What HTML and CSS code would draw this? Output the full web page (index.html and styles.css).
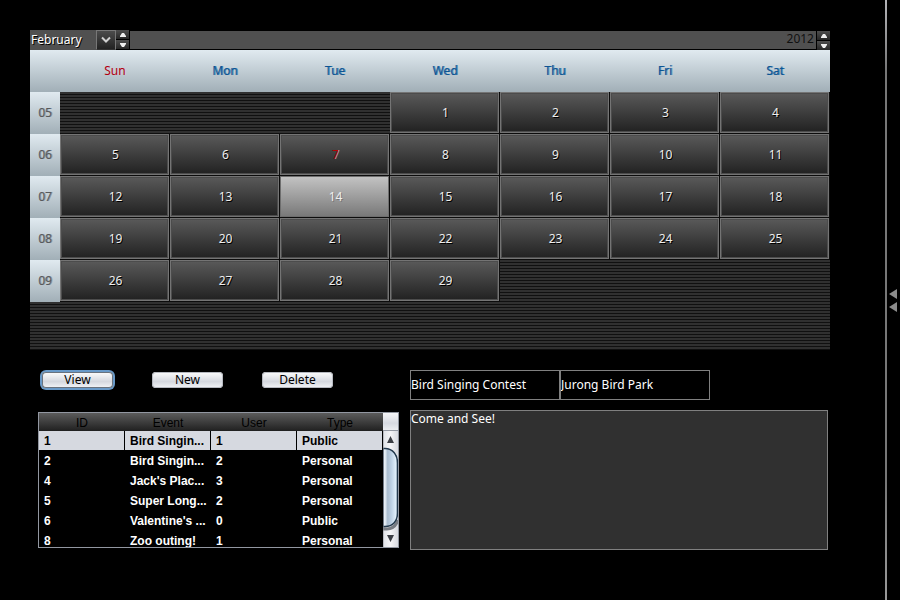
FILE: index.html
```html
<!DOCTYPE html>
<html lang="en">
<head>
<meta charset="utf-8">
<title>Event calendar</title>
<link rel="stylesheet" href="styles.css">
</head>
<body>
<div class="app">
<main class="main">
  <section class="calendar" aria-label="Calendar">
    <div class="bar">
      <div class="month">
        <select class="month-select" aria-label="Month"><option>February</option></select>
        <span class="month-arrow"><svg width="10" height="8" viewBox="0 0 10 8"><path d="M1 1.500L5 5.500L9 1.500" fill="none" stroke="#d0d0d0" stroke-width="2"/></svg></span>
      </div>
      <div class="spin">
        <button type="button" aria-label="Next month"><svg width="6" height="4"><path d="M0 4V3L2 0H4L6 3V4z"/></svg></button>
        <button type="button" aria-label="Previous month"><svg width="6" height="4"><path d="M0 0V1L2 4H4L6 1V0z"/></svg></button>
      </div>
      <input class="year" type="text" value="2012" aria-label="Year">
      <div class="spin">
        <button type="button" aria-label="Next year"><svg width="6" height="4"><path d="M0 4V3L2 0H4L6 3V4z"/></svg></button>
        <button type="button" aria-label="Previous year"><svg width="6" height="4"><path d="M0 0V1L2 4H4L6 1V0z"/></svg></button>
      </div>
    </div>
    <table class="days">
      <thead><tr><td class="corner"></td><th class="sunday">Sun</th><th>Mon</th><th>Tue</th><th>Wed</th><th>Thu</th><th>Fri</th><th>Sat</th></tr></thead>
      <tbody>
        <tr><th>05</th><td></td><td></td><td></td><td><button type="button">1</button></td><td><button type="button">2</button></td><td><button type="button">3</button></td><td><button type="button">4</button></td></tr>
        <tr><th>06</th><td><button type="button">5</button></td><td><button type="button">6</button></td><td><button type="button" class="today">7</button></td><td><button type="button">8</button></td><td><button type="button">9</button></td><td><button type="button">10</button></td><td><button type="button">11</button></td></tr>
        <tr><th>07</th><td><button type="button">12</button></td><td><button type="button">13</button></td><td><button type="button" class="selected">14</button></td><td><button type="button">15</button></td><td><button type="button">16</button></td><td><button type="button">17</button></td><td><button type="button">18</button></td></tr>
        <tr><th>08</th><td><button type="button">19</button></td><td><button type="button">20</button></td><td><button type="button">21</button></td><td><button type="button">22</button></td><td><button type="button">23</button></td><td><button type="button">24</button></td><td><button type="button">25</button></td></tr>
        <tr><th>09</th><td><button type="button">26</button></td><td><button type="button">27</button></td><td><button type="button">28</button></td><td><button type="button">29</button></td><td></td><td></td><td></td></tr>
      </tbody>
    </table>
  </section>

  <div class="lower">
    <section class="events">
      <div class="actions">
        <button type="button" class="focused">View</button>
        <button type="button">New</button>
        <button type="button">Delete</button>
      </div>
      <div class="list">
        <div class="list-body">
        <table>
          <thead><tr><th>ID</th><th>Event</th><th>User</th><th>Type</th></tr></thead>
          <tbody>
            <tr class="current"><td>1</td><td>Bird Singin...</td><td>1</td><td>Public</td></tr>
            <tr><td>2</td><td>Bird Singin...</td><td>2</td><td>Personal</td></tr>
            <tr><td>4</td><td>Jack's Plac...</td><td>3</td><td>Personal</td></tr>
            <tr><td>5</td><td>Super Long...</td><td>2</td><td>Personal</td></tr>
            <tr><td>6</td><td>Valentine's ...</td><td>0</td><td>Public</td></tr>
            <tr><td>8</td><td>Zoo outing!</td><td>1</td><td>Personal</td></tr>
          </tbody>
        </table>
        </div>
        <div class="scroll">
          <div class="scroll-corner"></div>
          <svg width="15" height="116" viewBox="0 0 15 116" aria-hidden="true">
            <defs>
              <linearGradient id="track"><stop offset="0" stop-color="#a9acb2"/><stop offset=".2" stop-color="#dcdee3"/><stop offset="1" stop-color="#f0f1f4"/></linearGradient>
              <linearGradient id="thumb"><stop offset="0" stop-color="#f4f8fc"/><stop offset=".15" stop-color="#e4ecf4"/><stop offset=".32" stop-color="#a9bccf"/><stop offset=".6" stop-color="#c0d3e6"/><stop offset=".9" stop-color="#e2f1fc"/><stop offset="1" stop-color="#a8bdd0"/></linearGradient>
              <linearGradient id="cap"><stop offset="0" stop-color="#e0e2e7"/><stop offset=".5" stop-color="#f5f5f7"/><stop offset="1" stop-color="#d8dae0"/></linearGradient>
            </defs>
            <rect width="15" height="116" fill="url(#track)"/>
            <path d="M0 0H15V27Q12 17 3 17H0z" fill="url(#cap)"/>
            <path d="M0 116H15V86Q12 97 3 97H0z" fill="url(#cap)"/>
            <path d="M0 98H4Q12 98 15 89" fill="none" stroke="#777b82" stroke-width="3"/>
            <path d="M0 17.500H2C10 17.500 14.500 24 14.500 32V82C14.500 90 10 95.500 2 95.500H0z" fill="url(#thumb)" stroke="#23394d" stroke-width="1.500"/>
            <path d="M0 0V116" stroke="#8d9097" stroke-width="1"/>
            <path d="M4 12L7.500 5L11 12z M4 104L7.500 111L11 104z" fill="#3c3f45"/>
          </svg>
        </div>
      </div>
    </section>
    <section class="details">
      <div class="fields">
        <input type="text" value="Bird Singing Contest" aria-label="Event name">
        <input type="text" value="Jurong Bird Park" aria-label="Venue">
      </div>
      <textarea aria-label="Description">Come and See!</textarea>
    </section>
  </div>
</main>
<aside class="splitter">
  <button type="button" aria-label="Collapse"><svg width="8" height="10"><path d="M8 0V10L0 5z"/></svg></button>
  <button type="button" aria-label="Collapse fully"><svg width="8" height="10"><path d="M8 0V10L0 5z"/></svg></button>
</aside>
</div>
</body>
</html>
```
FILE: styles.css
```css
* { box-sizing: border-box; }
body { margin: 0; background: #000; color: #fff; font: 12px/16px "Noto Sans", "Open Sans", sans-serif; }
button, input, select, textarea { font: inherit; color: inherit; margin: 0; padding: 0; border: 0; border-radius: 0; outline: 0; }
button { display: block; }
svg { display: block; }
table { width: 100%; border-collapse: collapse; table-layout: fixed; }
th, td { padding: 0; }

.app { display: flex; min-height: 100vh; }
.main { flex: 1; min-width: 0; padding: 30px 55px 30px 30px; }

.calendar { padding-bottom: 48px; background: repeating-linear-gradient(#303030 0 1px, #101010 1px 2px, #303030 2px 3px); }
.bar { display: flex; height: 20px; background: #000; }
.month { display: flex; position: relative; width: 86px; }
.month-select { flex: 1; appearance: none; padding-left: 1px; background: #505050; text-shadow: 1px 1px #000; }
.month-arrow { position: absolute; right: 0; top: 0; width: 20px; height: 20px; display: grid; place-items: center; border: 1px solid #777; border-bottom-color: #333; background: linear-gradient(#4c4c4c, #222); pointer-events: none; }
.spin { display: grid; grid-template-rows: 9px 9px; gap: 1px; width: 14px; padding-right: 1px; }
.spin:last-child { padding: 1px 0 0 1px; }
.spin button { display: grid; place-items: center; background: linear-gradient(#4e4e4e, #262626); }
.spin svg { fill: #eee; }
.year { flex: 1; min-width: 0; margin: 1px 0; padding: 0 2px 2px; background: #505050; color: #101010; text-align: right; }

.days tr { height: 42px; }
.days thead tr { background: linear-gradient(#e0eaf0, #a1afb7); }
.days thead th { color: #0c5594; font-weight: 400; text-shadow: 1px 0 #4b82ad; }
.days thead .sunday { color: #b00010; text-shadow: 1px 0 #d5c6d0; }
.days .corner { width: 30px; }
.days tbody th { font-weight: 400; color: #56595c; background: linear-gradient(#e0eaf0, #a1afb7); text-shadow: 1px 0 #8b9196; }
.days td button { width: 100%; height: 42px; padding-left: 2px; border: solid #0c0c0c; border-width: 0 1px 1px 0; background: linear-gradient(#5b5b5b, #202020); box-shadow: inset 0 0 0 1px #747474, inset 0 0 0 2px #4c4c4c; color: #eee; text-shadow: 1px 1px #000; }
.days td .today { color: #b60000; text-shadow: 1px 0 #aaa; }
.days td .selected { background: linear-gradient(#c4c4c4, #777); box-shadow: inset 0 0 0 1px #6e6e6e; text-shadow: 1px 1px #777; }

.lower { display: grid; grid-template-columns: 361fr 418fr; gap: 11px; padding: 20px 2px 0 8px; }
.actions { display: flex; gap: 39px; padding: 2px 4px 0; }
.actions button { width: 71px; height: 16px; border-radius: 4px; background: linear-gradient(#fdfdfd, #d5d8df 60%, #f4f5f8); color: #000; box-shadow: inset 0 0 0 1px #b6b9c0; line-height: 16px; }
.actions .focused { box-shadow: inset 0 0 0 1px #69727d, 0 0 0 2px #6899c8; }
.list { display: flex; height: 136px; margin-top: 24px; border: 1px solid #9297a1; overflow: hidden; font: 12px/16px "Liberation Sans", Arial, sans-serif; }
.list-body { flex: 1; min-width: 0; }
.list thead tr { height: 18px; background: linear-gradient(#5b5b5b, #202020); color: #000; }
.list thead th { font-weight: 400; padding-top: 2px; }
.list tbody tr { height: 20px; font-weight: 700; }
.list td { padding: 0 0 1px 5px; white-space: nowrap; }
.list .current td { color: #000; background: #d6d9e0; box-shadow: inset -1px -1px #000; }
.scroll { width: 15px; }
.scroll-corner { height: 18px; border-bottom: 1px solid #9297a1; background: linear-gradient(#f6f6f8, #d7dae1 60%, #eceef1); }

.fields { display: grid; grid-template-columns: 150px 150px; height: 30px; }
.fields input { width: 150px; height: 30px; padding-bottom: 1px; border: 1px solid #808080; background: #000; }
textarea { display: block; width: 100%; height: 140px; margin-top: 10px; border: 1px solid #808080; background: #303030; resize: none; }

.splitter { display: flex; flex-direction: column; justify-content: center; gap: 3px; width: 15px; padding-left: 2px; border-left: 2px solid; border-image: linear-gradient(#b4b4b8, #777 12%, #777 80%, #999) 1; }
.splitter button { background: none; }
.splitter svg { fill: #8c8c8c; }
```
